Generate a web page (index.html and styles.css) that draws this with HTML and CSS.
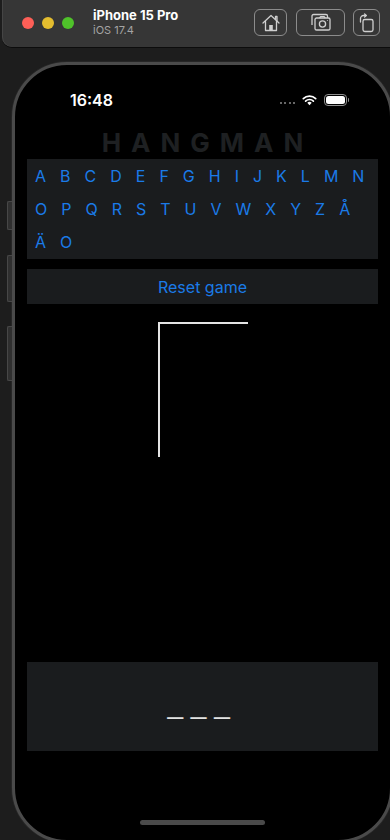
FILE: index.html
```html
<!DOCTYPE html>
<html lang="en">
<head>
<meta charset="utf-8">
<title>Hangman – iPhone 15 Pro</title>
<link rel="stylesheet" href="styles.css">
</head>
<body>
<div class="sim">
  <header class="toolbar">
    <div class="lights">
      <span class="light red"></span>
      <span class="light yellow"></span>
      <span class="light green"></span>
    </div>
    <div class="device">
      <div class="device-name">iPhone 15 Pro</div>
      <div class="device-os">iOS 17.4</div>
    </div>
    <div class="tools">
      <button class="tool tool-home" aria-label="Home">
        <svg width="20" height="20" viewBox="0 0 20 20" fill="none" stroke="#cfcfcf" stroke-width="1.3" stroke-linejoin="round" stroke-linecap="round">
          <path d="M2 10 L10 2.5 L18 10"/>
          <path d="M14.5 6.2 V3.5 H16 V7.6"/>
          <path d="M4.5 8.5 V17.5 H15.5 V8.5"/>
          <rect x="8.2" y="12" width="3.6" height="5.5" fill="#cfcfcf" stroke="none"/>
        </svg>
      </button>
      <button class="tool tool-shot" aria-label="Screenshot">
        <svg width="26" height="20" viewBox="0 0 26 20" fill="none" stroke="#cfcfcf" stroke-width="1.3" stroke-linejoin="round">
          <path d="M4 12 V3 a1.5 1.5 0 0 1 1.5 -1.5 H18 a1.5 1.5 0 0 1 1.5 1.5 V5"/>
          <rect x="7" y="5" width="15" height="12" rx="1.6"/>
          <path d="M11.5 5 L12.6 3.6 H16.2 L17.3 5"/>
          <circle cx="14.5" cy="11" r="3.1"/>
          <circle cx="19.4" cy="7.6" r="0.5" fill="#cfcfcf" stroke="none"/>
        </svg>
      </button>
      <button class="tool tool-rotate" aria-label="Rotate">
        <svg width="18" height="20" viewBox="0 0 18 20" fill="none" stroke="#cfcfcf" stroke-width="1.3" stroke-linejoin="round" stroke-linecap="round">
          <rect x="5" y="6.5" width="10" height="12" rx="1.8"/>
          <path d="M2.5 9 V5.5 a3 3 0 0 1 3 -3 H8"/>
          <path d="M6.6 1 L8.3 2.5 L6.6 4"/>
        </svg>
      </button>
    </div>
  </header>

  <div class="phone">
    <span class="side-btn side-action"></span>
    <span class="side-btn side-up"></span>
    <span class="side-btn side-down"></span>

    <div class="status">
      <span class="time">16:48</span>
      <div class="indicators">
        <span class="signal"><i></i><i></i><i></i><i></i></span>
        <svg class="wifi" width="15" height="12" viewBox="0 0 15 12">
          <path d="M7.5 11.2 L5.3 8.8 a3.2 3.2 0 0 1 4.4 0 Z" fill="#fff"/>
          <path d="M3.6 7.1 a5.6 5.6 0 0 1 7.8 0" stroke="#fff" stroke-width="1.7" fill="none" stroke-linecap="round"/>
          <path d="M1.3 4.6 a8.9 8.9 0 0 1 12.4 0" stroke="#fff" stroke-width="1.7" fill="none" stroke-linecap="round"/>
        </svg>
        <span class="battery"><span class="battery-fill"></span></span>
      </div>
    </div>

    <h1 class="title">HANGMAN</h1>

    <div class="keyboard">
      <button class="key">A</button>
      <button class="key">B</button>
      <button class="key">C</button>
      <button class="key">D</button>
      <button class="key">E</button>
      <button class="key">F</button>
      <button class="key">G</button>
      <button class="key">H</button>
      <button class="key">I</button>
      <button class="key">J</button>
      <button class="key">K</button>
      <button class="key">L</button>
      <button class="key">M</button>
      <button class="key">N</button>
      <button class="key">O</button>
      <button class="key">P</button>
      <button class="key">Q</button>
      <button class="key">R</button>
      <button class="key">S</button>
      <button class="key">T</button>
      <button class="key">U</button>
      <button class="key">V</button>
      <button class="key">W</button>
      <button class="key">X</button>
      <button class="key">Y</button>
      <button class="key">Z</button>
      <button class="key">Å</button>
      <button class="key">Ä</button>
      <button class="key">O</button>
    </div>

    <button class="reset">Reset game</button>

    <div class="stage">
      <svg class="gallows" width="351" height="358" viewBox="0 0 351 358">
        <path d="M132 153 V19 H221" stroke="#e4e4e4" stroke-width="2" fill="none"/>
      </svg>
    </div>

    <div class="word">_ _ _ </div>

    <div class="home-indicator"></div>
  </div>
</div>
</body>
</html>
```

FILE: styles.css
```css
* {
  box-sizing: border-box;
}

html, body {
  margin: 0;
  padding: 0;
}

body {
  width: 390px;
  height: 840px;
  overflow: hidden;
  background: #1d1d1d;
  font-family: Inter, "Noto Sans", sans-serif;
}

.sim {
  display: flex;
  flex-direction: column;
}

/* ---------- simulator toolbar ---------- */
.toolbar {
  height: 47px;
  margin-left: 2px;
  padding: 0 10px 2px 20px;
  background: #363636;
  border-bottom-left-radius: 10px;
  box-shadow: 0 1px 0 #0c0c0c, inset 1px 0 0 #454545;
  display: flex;
  align-items: center;
}

.lights {
  display: flex;
  gap: 8px;
}

.light {
  width: 12px;
  height: 12px;
  border-radius: 50%;
}

.red { background: #fe5f57; }
.yellow { background: #e4bd2f; }
.green { background: #4fc22a; }

.device {
  margin-left: 19px;
  display: flex;
  flex-direction: column;
}

.device-name {
  color: #ffffff;
  font-size: 13px;
  font-weight: 700;
  line-height: 15px;
}

.device-os {
  color: #a4a4a4;
  font-size: 11px;
  line-height: 14px;
}

.tools {
  margin-left: auto;
  display: flex;
  gap: 8px;
}

.tool {
  height: 27px;
  padding: 0;
  border: 1px solid #8c8c8c;
  border-radius: 6px;
  background: transparent;
  display: flex;
  align-items: center;
  justify-content: center;
}

.tool-home { width: 33px; margin-right: 1px; }
.tool-shot { width: 49px; }
.tool-rotate { width: 27px; }

/* ---------- phone ---------- */
.phone {
  position: relative;
  margin: 15px 0 0 12px;
  width: 381px;
  height: 781px;
  border: 3px solid #4a4a4a;
  border-radius: 55px;
  background: #000;
  box-shadow: 0 0 0 1px #262626;
  display: flex;
  flex-direction: column;
}

.side-btn {
  position: absolute;
  left: -8px;
  width: 5px;
  background: #2f2f2f;
  border: 1px solid #474747;
  border-right: 0;
  border-radius: 2px 0 0 2px;
}

.side-action { top: 136px; height: 29px; }
.side-up { top: 190px; height: 47px; }
.side-down { top: 261px; height: 55px; }

.status {
  margin-top: 23px;
  height: 24px;
  padding: 0 41px 0 55px;
  display: flex;
  align-items: center;
  justify-content: space-between;
}

.time {
  color: #fff;
  font-size: 16px;
  font-weight: 600;
  line-height: 24px;
}

.indicators {
  display: flex;
  align-items: center;
  gap: 7px;
}

.signal {
  display: flex;
  gap: 2.5px;
  margin-top: 6px;
}

.signal i {
  width: 2px;
  height: 2px;
  border-radius: 50%;
  background: #8a8a8a;
}

.wifi {
  display: block;
}

.battery {
  position: relative;
  width: 23px;
  height: 12px;
  border: 1px solid #8f8f8f;
  border-radius: 4px;
  padding: 1px;
  margin-right: 2px;
}

.battery::after {
  content: "";
  position: absolute;
  right: -3px;
  top: 3px;
  width: 1.5px;
  height: 4px;
  border-radius: 0 1px 1px 0;
  background: #8f8f8f;
}

.battery-fill {
  display: block;
  width: 100%;
  height: 100%;
  border-radius: 2.5px;
  background: #fff;
}

.title {
  margin: 16px 0 0;
  height: 30px;
  font-size: 26px;
  line-height: 30px;
  font-weight: 700;
  letter-spacing: 10px;
  text-indent: 10px;
  text-align: center;
  color: #1e2022;
}

.keyboard {
  margin: 1px 12px 0;
  height: 100px;
  padding: 7px 8px;
  background: #1a1c1e;
  display: flex;
  flex-wrap: wrap;
  align-content: flex-start;
  row-gap: 13px;
  column-gap: 14px;
}

.key {
  padding: 0;
  border: 0;
  background: none;
  font-family: Inter, "Noto Sans", sans-serif;
  font-size: 16px;
  line-height: 20px;
  height: 20px;
  color: #1a7be8;
}

.reset {
  margin: 10px 12px 0;
  height: 35px;
  border: 0;
  padding: 0;
  background: #1a1c1e;
  font-family: Inter, "Noto Sans", sans-serif;
  font-size: 16px;
  color: #1a7be8;
}

.stage {
  margin: 0 12px;
  height: 358px;
}

.gallows {
  display: block;
}

.word {
  margin: 0 12px;
  height: 89px;
  padding-top: 28px;
  background: #1a1c1e;
  font-family: "Liberation Sans", Arial, sans-serif;
  font-size: 28px;
  line-height: 28px;
  color: #e2e2e2;
  text-align: center;
  white-space: pre;
}

.home-indicator {
  margin: 69px auto 0;
  width: 125px;
  height: 5px;
  border-radius: 3px;
  background: #4a4a4a;
}
```
